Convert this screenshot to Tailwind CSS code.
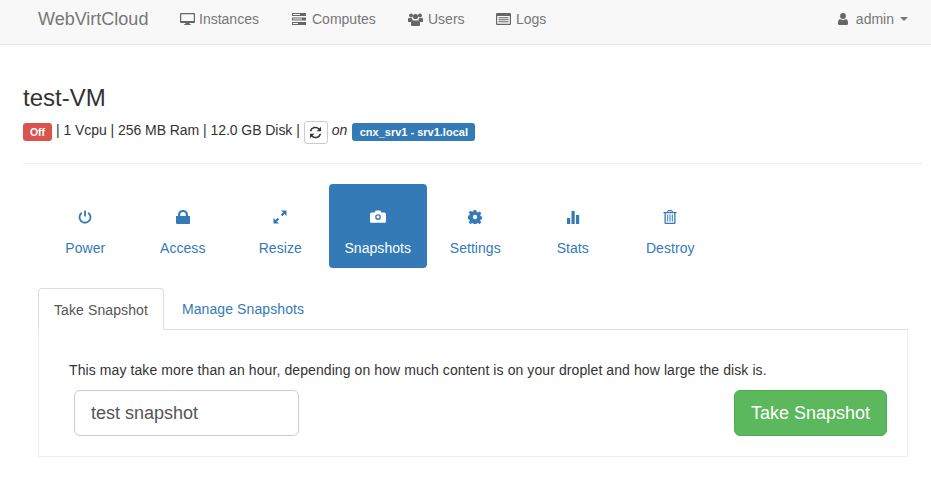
<!DOCTYPE html>
<html lang="en">
<head>
  <meta charset="UTF-8" />
  <title>WebVirtCloud</title>
  <script src="https://cdn.jsdelivr.net/npm/@tailwindcss/browser@4"></script>
</head>
<body class="bg-white text-[#333] text-[14px] leading-[20px] font-['Liberation_Sans',Arial,sans-serif]">
  <!-- top nav -->
  <nav class="h-[45px] bg-[#f8f8f8] border-b border-[#e7e7e7] flex items-center pl-[38px] pr-[23px] pb-[6px] text-[#777]">
    <a class="text-[18px] w-[142px]">WebVirtCloud</a>
    <a class="flex items-center w-[112px]">
      <svg class="w-[15px] h-[14px] mr-[4px] fill-[#666]" viewBox="0 0 15 14"><path d="M1 1h13a1 1 0 0 1 1 1v8a1 1 0 0 1-1 1H9.500v1.200H11V13H4v-.8h1.500V11H1a1 1 0 0 1-1-1V2a1 1 0 0 1 1-1zm.2 1.200v6.800h12.600V2.200z"/></svg>
      Instances
    </a>
    <a class="flex items-center w-[116px]">
      <svg class="w-[14px] h-[12px] mr-[6px] fill-[#666]" viewBox="0 0 14 12"><path d="M0 0h14v3H0zm1 1v1h7V1zM0 4.500h14v3H0zm1 1v1h9v-1zM0 9h14v3H0zm1 1v1h5v-1z" fill-rule="evenodd"/></svg>
      Computes
    </a>
    <a class="flex items-center w-[88px]">
      <svg class="w-[15px] h-[13px] mr-[5px] fill-[#666]" viewBox="0 0 15 13"><circle cx="3" cy="2.500" r="2"/><circle cx="12" cy="2.500" r="2"/><circle cx="7.500" cy="3.500" r="2.600"/><path d="M0 6q0-1 1-1h2.500q.6 1.500 1.500 2-1.500.6-1.800 2H0zM15 6q0-1-1-1h-2.500q-.6 1.500-1.500 2 1.500.6 1.800 2H15zM4.500 7.500h6q1.500 0 1.500 2V12q0 1-1 1H4q-1 0-1-1V9.500q0-2 1.500-2z"/></svg>
      Users
    </a>
    <a class="flex items-center">
      <svg class="w-[15px] h-[12px] mr-[5px] fill-[#666]" viewBox="0 0 15 12"><path fill-rule="evenodd" d="M1 0h13a1 1 0 0 1 1 1v10a1 1 0 0 1-1 1H1a1 1 0 0 1-1-1V1a1 1 0 0 1 1-1zm.200 3v7.800h12.600V3zM2.500 4.200h10v1h-10zm0 2h10v1h-10zm0 2h10v1h-10z"/></svg>
      Logs
    </a>
    <a class="flex items-center ml-auto">
      <svg class="w-[10px] h-[12px] mr-[8px] fill-[#666]" viewBox="0 0 10 12"><circle cx="5" cy="3" r="2.900"/><path d="M2 6q3 1.800 6 0 2 .5 2 4v.7q0 1.300-1.300 1.300H1.300Q0 12 0 10.700V10q0-3.500 2-4z"/></svg>
      admin
      <span class="ml-[6px] w-0 h-0 border-x-[4px] border-x-transparent border-t-[4px] border-t-[#777]"></span>
    </a>
  </nav>

  <main class="pl-[23px] pr-[8px]">
    <h1 class="text-[24px] leading-[26px] mt-[40px]">test-VM</h1>
    <div class="flex items-center h-[24px] mt-[9px]">
      <span class="h-[18px] w-[29px] rounded-[3px] bg-[#d9534f] text-white text-[10.500px] font-bold leading-[18px] text-center">Off</span>
      <span class="ml-[4px] mb-[4px] tracking-[-0.05px]">| 1 Vcpu | 256 MB Ram | 12.0 GB Disk |</span>
      <span class="ml-[4px] w-[24px] h-[23px] border border-[#ccc] rounded-[3px] flex items-center justify-center">
        <svg class="w-[13px] h-[13px]" viewBox="0 0 13 13"><path class="fill-none stroke-[#333] stroke-[1.500]" d="M1.500 5.200A5 5 0 0 1 10 3M11.500 7.800A5 5 0 0 1 3 10"/><path class="fill-[#333]" d="M12 .8v4.400H7.600zM1 12.200V7.800h4.400z"/></svg>
      </span>
      <em class="ml-[4px] mb-[4px]">on</em>
      <span class="ml-[5px] h-[18px] w-[123px] rounded-[3px] bg-[#337ab7] text-white text-[11px] font-bold leading-[18px] text-center">cnx_srv1 - srv1.local</span>
    </div>
    <hr class="border-t border-[#eee] mt-[19px]" />

    <!-- section pills -->
    <ul class="grid grid-cols-[repeat(7,97.500px)] ml-[13.500px] mt-[20px] text-[#337ab7] text-center tracking-[0.05px]">
      <li class="h-[84px] flex flex-col items-center pt-[26px]">
        <svg class="w-[14px] h-[14px] fill-none stroke-[#337ab7] stroke-[1.800]" viewBox="0 0 14 14"><path d="M3.800 2.800a5.500 5.500 0 1 0 6.400 0M7 .6v5.800"/></svg>
        <span class="mt-[14px]">Power</span>
      </li>
      <li class="h-[84px] flex flex-col items-center pt-[26px]">
        <svg class="w-[14px] h-[14px] fill-[#337ab7]" viewBox="0 0 14 14"><path d="M0 6h2V4.500a5 4.500 0 0 1 10 0V6h2v7a1 1 0 0 1-1 1H1a1 1 0 0 1-1-1zm4.200 0h5.600V4.500a2.800 2.500 0 0 0-5.600 0z"/></svg>
        <span class="mt-[14px]">Access</span>
      </li>
      <li class="h-[84px] flex flex-col items-center pt-[26px]">
        <svg class="w-[14px] h-[14px] fill-[#337ab7]" viewBox="0 0 14 14"><path d="M8 .500h5.500V6l-2-2L9.300 6.200 7.800 4.700 10 2.500zM6 13.500H.500V8l2 2 2.200-2.200 1.500 1.500L4 11.500z"/></svg>
        <span class="mt-[14px]">Resize</span>
      </li>
      <li class="h-[84px] flex flex-col items-center pt-[26px] bg-[#337ab7] text-white rounded-[4px]">
        <svg class="w-[16px] h-[13px] mb-[1px] fill-white" viewBox="0 1.500 14 11"><path fill-rule="evenodd" d="M1.500 3.500H4L5 1.800h4l1 1.700h2.500A1.500 1.500 0 0 1 14 5v6.500a1 1 0 0 1-1 1H1a1 1 0 0 1-1-1V5a1.500 1.500 0 0 1 1.500-1.500zM7 5a2.500 2.500 0 1 0 0 5 2.500 2.500 0 0 0 0-5zm0 1.200a1.300 1.300 0 1 1 0 2.600 1.300 1.300 0 0 1 0-2.600z"/></svg>
        <span class="mt-[14px]">Snapshots</span>
      </li>
      <li class="h-[84px] flex flex-col items-center pt-[26px]">
        <svg class="w-[14px] h-[14px] fill-[#337ab7]" viewBox="0 0 14 14"><path fill-rule="evenodd" d="M5.800 0h2.400l.4 2 1.300.6 1.700-1.100 1.700 1.700-1.100 1.700.5 1.300 2 .4v2.400l-2 .4-.5 1.300 1.100 1.700-1.700 1.700-1.700-1.100-1.300.5-.4 2H5.800l-.4-2-1.300-.5-1.700 1.100-1.700-1.700 1.100-1.700-.6-1.300-2-.4V5.800l2-.4.6-1.300-1.100-1.700 1.700-1.700 1.700 1.100 1.300-.6zM7 4.800a2.200 2.200 0 1 0 0 4.400 2.200 2.200 0 0 0 0-4.400z"/></svg>
        <span class="mt-[14px]">Settings</span>
      </li>
      <li class="h-[84px] flex flex-col items-center pt-[26px]">
        <svg class="w-[14px] h-[14px] fill-[#337ab7]" viewBox="0 0 14 14"><path d="M1 8h3.200v6H1zM5.500 1h3.200v13H5.500zM10 5h3.200v9H10z"/></svg>
        <span class="mt-[14px]">Stats</span>
      </li>
      <li class="h-[84px] flex flex-col items-center pt-[26px]">
        <svg class="w-[14px] h-[14px] fill-[#337ab7]" viewBox="0 0 14 14"><path fill-rule="evenodd" d="M5 0h4l1 2h3.500v1.200h-1V13a1 1 0 0 1-1 1h-9a1 1 0 0 1-1-1V3.200h-1V2H4zm.400 1.200L5 2h4l-.4-.8zM2.800 3.200v9.600h8.400V3.200zM4.200 4.500h1v7h-1zm2.300 0h1v7h-1zm2.300 0h1v7h-1z"/></svg>
        <span class="mt-[14px]">Destroy</span>
      </li>
    </ul>

    <!-- tabs -->
    <div class="ml-[15px] mr-[15px] mt-[20px]">
      <div class="flex h-[42px] border-b border-[#ddd] tracking-[0.1px]">
        <a class="h-[42px] px-[15px] pt-[11px] bg-white border border-[#ddd] border-b-white rounded-t-[4px] text-[#555]">Take Snapshot</a>
        <a class="px-[18px] pt-[11px] text-[#337ab7]">Manage Snapshots</a>
      </div>
      <div class="h-[127px] border border-t-0 border-[#eee] pl-[30px] pr-[20px] pt-[30px]">
        <p class="tracking-[0.09px]">This may take more than an hour, depending on how much content is on your droplet and how large the disk is.</p>
        <div class="flex justify-between mt-[10px] pl-[5px]">
          <input value="test snapshot" class="w-[225px] h-[46px] border border-[#ccc] rounded-[6px] px-[16px] text-[18px] text-[#555]" />
          <button class="w-[153px] h-[46px] bg-[#5cb85c] border border-[#4cae4c] rounded-[6px] text-white text-[18px]">Take Snapshot</button>
        </div>
      </div>
    </div>
  </main>
</body>
</html>
